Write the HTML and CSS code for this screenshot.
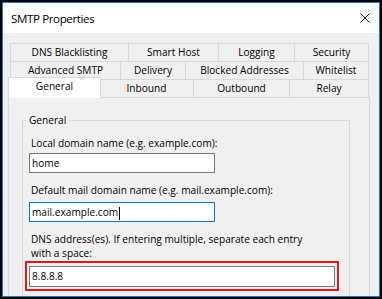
FILE: index.html
```html
<!DOCTYPE html>
<html>
<head>
<meta charset="utf-8">
<title>SMTP Properties</title>
<link rel="stylesheet" href="styles.css">
</head>
<body>
<div class="frame">
  <div class="window">
    <div class="titlebar">
      <span class="title">SMTP Properties</span>
      <svg class="close" width="10" height="10" viewBox="0 0 10 10"><path d="M0.5 0.5 L9.5 9.5 M9.5 0.5 L0.5 9.5" stroke="#111" stroke-width="1" fill="none"/></svg>
    </div>
    <div class="content">
      <div class="tabrow">
        <div class="tab t-dns">DNS Blacklisting</div>
        <div class="tab t-smart">Smart Host</div>
        <div class="tab t-log">Logging</div>
        <div class="tab t-sec last">Security</div>
      </div>
      <div class="tabrow">
        <div class="tab t-adv">Advanced SMTP</div>
        <div class="tab t-del">Delivery</div>
        <div class="tab t-blk">Blocked Addresses</div>
        <div class="tab t-white last">Whitelist</div>
      </div>
      <div class="tabrow">
        <div class="tab t-gen sel">General</div>
        <div class="tab t-in">Inbound</div>
        <div class="tab t-out">Outbound</div>
        <div class="tab t-relay last">Relay</div>
      </div>
      <div class="panel">
        <fieldset class="group">
          <legend>General</legend>
          <div class="label">Local domain name (e.g. example.com):</div>
          <div class="box">home</div>
          <div class="label l2">Default mail domain name (e.g. mail.example.com):</div>
          <div class="box focus">mail.example.com<span class="caret"></span></div>
          <div class="label l3">DNS address(es). If entering multiple, separate each entry<br>with a space:</div>
          <div class="hl">
            <div class="box wide">8.8.8.8</div>
          </div>
        </fieldset>
      </div>
    </div>
  </div>
</div>
</body>
</html>
```

FILE: styles.css
```css
html, body {
  margin: 0;
  padding: 0;
  width: 382px;
  height: 299px;
  overflow: hidden;
  background: #000;
}

body {
  font-family: "Open Sans", "Noto Sans", sans-serif;
  font-size: 10.15px;
  color: #000;
}

.frame {
  box-sizing: border-box;
  width: 382px;
  height: 299px;
  border: 2px solid #000;
}

.window {
  box-sizing: border-box;
  height: 100%;
  border: 1px solid #1e76d2;
  display: flex;
  flex-direction: column;
  background: #f0f0f0;
}

.titlebar {
  flex: none;
  height: 30px;
  background: #fff;
  display: flex;
  align-items: center;
  justify-content: space-between;
  padding: 0 9px 0 8px;
}

.title {
  font-size: 11.6px;
  letter-spacing: -0.4px;
}

.close {
  display: block;
  width: 10px;
  height: 10px;
}

.content {
  flex: 1;
  min-height: 0;
  overflow: hidden;
  padding: 10px 9px 0 5px;
}

.tabrow {
  display: flex;
  height: 18px;
  padding-left: 2px;
}

.tab {
  box-sizing: border-box;
  flex: none;
  height: 18px;
  border-top: 1px solid #d9d9d9;
  border-left: 1px solid #d9d9d9;
  background: #f0f0f0;
  text-align: center;
  line-height: 17px;
  white-space: nowrap;
}

.tab.last {
  border-right: 1px solid #d9d9d9;
}

.tab.sel {
  position: relative;
  z-index: 1;
  height: 21px;
  margin: -2px -2px 0 -2px;
  background: #fff;
  border-right: 1px solid #d9d9d9;
}

.t-dns { width: 118px; }
.t-smart { width: 90px; }
.t-log { width: 76px; }
.t-sec { width: 75px; }

.t-adv { width: 110px; }
.t-del { width: 65px; }
.t-blk { width: 118px; }
.t-white { width: 66px; }

.t-gen { width: 93px; }
.t-in { width: 94px; }
.t-out { width: 96px; }
.t-relay { width: 80px; }

.panel {
  box-sizing: border-box;
  height: 320px;
  border: 1px solid #d9d9d9;
  background: #f0f0f0;
  padding: 0 19px 0 13px;
}

.group {
  box-sizing: border-box;
  margin: 15px 0 0 0;
  padding: 9px 0 0 6px;
  border: 1px solid #dcdcdc;
  min-width: 0;
  height: 300px;
}

.group legend {
  padding: 0 2px;
  margin-left: -2px;
  line-height: 14px;
}

.label {
  line-height: 15px;
  margin-left: 2px;
  white-space: nowrap;
}

.l2 {
  margin-top: 10px;
}

.l3 {
  margin-top: 11px;
  line-height: 13.5px;
}

.box {
  box-sizing: border-box;
  width: 186px;
  height: 20px;
  margin-top: 2px;
  border: 1px solid #7a7a7a;
  background: #fff;
  line-height: 18px;
  padding-left: 2px;
  white-space: nowrap;
}

.box.focus {
  margin-top: 4px;
  border-color: #0078d7;
}

.caret {
  display: inline-block;
  width: 1px;
  height: 13px;
  background: #000;
  vertical-align: middle;
  margin-left: 1px;
}

.hl {
  box-sizing: border-box;
  width: 314px;
  margin: 1px 0 0 -4px;
  border: 2px solid #dd1a22;
  padding: 3px 2px 2px 2px;
}

.box.wide {
  width: 306px;
  height: 21px;
  margin: 0;
  line-height: 19px;
}
```
